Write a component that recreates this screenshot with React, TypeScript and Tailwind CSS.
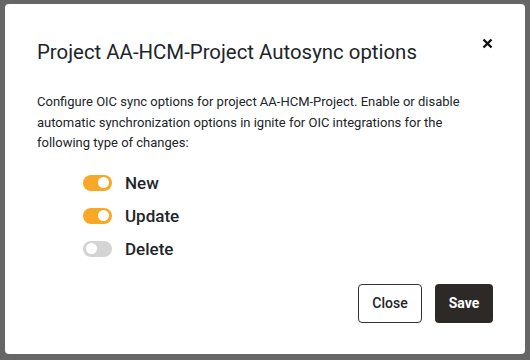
const options = [
  { label: "New", on: true },
  { label: "Update", on: true },
  { label: "Delete", on: false },
];

const Toggle = ({ on }: { on: boolean }) => (
  <div
    className={`w-[29px] h-[16px] rounded-full flex items-center px-[3px] ${
      on ? "bg-[#f9a727] justify-end" : "bg-[#d4d4d4] justify-start"
    }`}
  >
    <div className="w-[11px] h-[11px] rounded-full bg-white"></div>
  </div>
);

const App = () => {
  return (
    <div
      className="w-[530px] h-[360px] bg-[#666666] pt-[4px] pl-[5px] overflow-hidden"
      style={{ fontFamily: "Roboto, 'Noto Sans', sans-serif" }}
    >
      <div className="w-[520px] h-[350px] bg-white rounded-[4px] pl-[32px] pr-[32px] pt-[33px] flex flex-col text-[#212529]">
        <div className="flex items-start justify-between">
          <h2 className="text-[20.4px] leading-[30px] font-normal">
            Project AA-HCM-Project Autosync options
          </h2>
          <button className="mt-[-2px] mr-[-2px] w-[16px] h-[16px] flex items-center justify-center">
            <svg width="11" height="11" viewBox="0 0 11 11">
              <path d="M1.5 1.5 L9.5 9.5 M9.5 1.5 L1.5 9.5" stroke="#111" strokeWidth="2.4" strokeLinecap="butt" />
            </svg>
          </button>
        </div>
        <p className="mt-[25px] text-[13px] leading-[20.5px] pr-[20px]">
          Configure OIC sync options for project AA-HCM-Project. Enable or disable automatic
          synchronization options in ignite for OIC integrations for the following type of changes:
        </p>
        <div className="mt-[19px] ml-[46px] flex flex-col gap-[13px]">
          {options.map((o) => (
            <div key={o.label} className="flex items-center gap-[13px] h-[20px]">
              <Toggle on={o.on} />
              <span className="text-[17px] font-medium leading-[20px]">{o.label}</span>
            </div>
          ))}
        </div>
        <div className="mt-auto mb-[31px] flex justify-end gap-[13px]">
          <button className="w-[64px] h-[39px] border border-[#333] rounded-[4px] bg-white text-[14px] font-medium text-[#212529]">
            Close
          </button>
          <button className="w-[58px] h-[39px] rounded-[4px] bg-[#2d2926] text-[14px] font-bold text-white">
            Save
          </button>
        </div>
      </div>
    </div>
  );
};

export default App;
